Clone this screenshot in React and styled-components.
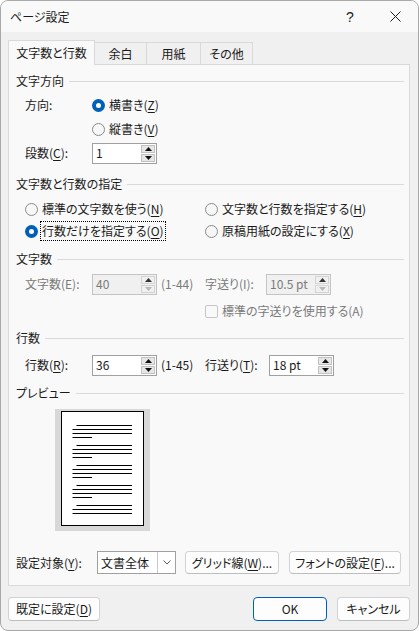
import React from 'react';
import styled, { createGlobalStyle, css } from 'styled-components';

const GlobalStyle = createGlobalStyle`
  html, body { margin: 0; padding: 0; background: #ffffff; }
  body {
    font-family: "Noto Sans CJK JP", "Noto Sans", sans-serif;
    font-size: 12px;
    line-height: 16px;
    color: #1a1a1a;
    font-feature-settings: "palt";
  }
  * { box-sizing: border-box; }
`;

const Window = styled.div`
  width: 419px;
  height: 631px;
  background: #f0f0f0;
  border: 1px solid #a8a8a8;
  border-radius: 8px;
  overflow: hidden;
  display: flex;
  flex-direction: column;
`;

const TitleBar = styled.div`
  height: 31px;
  flex: none;
  display: flex;
  align-items: center;
  background: #f9f9f9;
  padding-left: 9px;
`;

const TitleText = styled.div`
  flex: 1;
  color: #1a1a1a;
`;

const TitleButton = styled.div`
  width: ${p => p.$w}px;
  height: 31px;
  display: flex;
  align-items: center;
  justify-content: center;
  font-family: "Liberation Sans", sans-serif;
  font-size: 14px;
  color: #1a1a1a;
`;

const Body = styled.div`
  flex: 1;
  display: flex;
  flex-direction: column;
  padding: 8px 8px 0 7px;
`;

const TabRow = styled.div`
  display: flex;
  align-items: flex-end;
  height: 24px;
`;

const Tab = styled.div`
  width: ${p => p.$w}px;
  height: ${p => (p.$active ? 25 : 22)}px;
  margin-bottom: ${p => (p.$active ? -1 : 0)}px;
  margin-left: ${p => (p.$first ? 0 : -1)}px;
  border: 1px solid #d9d9d9;
  border-bottom: none;
  background: ${p => (p.$active ? '#f9f9f9' : '#f0f0f0')};
  display: flex;
  align-items: center;
  justify-content: center;
  position: relative;
  z-index: ${p => (p.$active ? 2 : 1)};
  padding-bottom: ${p => (p.$active ? 1 : 0)}px;
  color: #1a1a1a;
`;

const Panel = styled.div`
  height: 522px;
  flex: none;
  border: 1px solid #d9d9d9;
  background: #f9f9f9;
  padding: 0 5px 0 7px;
  display: flex;
  flex-direction: column;
`;

const SectionHeader = styled.div`
  display: flex;
  align-items: center;
  height: 18px;
  margin-top: ${p => p.$mt}px;
`;

const SectionRule = styled.div`
  flex: 1;
  height: 1px;
  background: #dadada;
  margin-left: 5px;
`;

const FieldRow = styled.div`
  display: flex;
  align-items: center;
  height: 22px;
  margin-top: ${p => p.$mt}px;
  padding-left: ${p => (p.$indent ?? 9)}px;
`;

const Label = styled.div`
  width: ${p => p.$w}px;
  flex: none;
  white-space: nowrap;
  color: ${p => (p.$disabled ? '#7a7a7a' : '#1a1a1a')};
`;

const Key = styled.span`
  text-decoration: underline;
  text-underline-offset: 2px;
`;

const RadioItem = styled.div`
  display: flex;
  align-items: center;
  gap: 4px;
  white-space: nowrap;
`;

const RadioCircle = styled.span`
  width: 13px;
  height: 13px;
  border-radius: 50%;
  flex: none;
  ${p =>
    p.$checked
      ? css`
          background: #005fb8;
          display: flex;
          align-items: center;
          justify-content: center;
          &::after {
            content: '';
            width: 5px;
            height: 5px;
            border-radius: 50%;
            background: #ffffff;
          }
        `
      : css`
          background: #f7f7f7;
          border: 1px solid #8a8a8a;
        `}
`;

const ItemText = styled.span`
  ${p =>
    p.$focus &&
    css`
      outline: 1px dotted #000;
      outline-offset: 1px;
    `}
  color: ${p => (p.$disabled ? '#7a7a7a' : '#1a1a1a')};
`;

const RadioGrid = styled.div`
  display: grid;
  grid-template-columns: 180px 1fr;
  grid-auto-rows: 22px;
  align-items: center;
  margin-top: ${p => p.$mt}px;
  padding-left: 9px;
`;

const SpinBox = styled.div`
  width: ${p => p.$w}px;
  height: 21px;
  flex: none;
  display: flex;
  border: 1px solid ${p => (p.$disabled ? '#c4c4c4' : '#a0a0a0')};
  background: ${p => (p.$disabled ? '#f0f0f0' : '#ffffff')};
`;

const SpinValue = styled.div`
  flex: 1;
  display: flex;
  align-items: center;
  padding-left: 3px;
  white-space: nowrap;
  color: ${p => (p.$disabled ? '#7a7a7a' : '#1a1a1a')};
`;

const SpinButtons = styled.div`
  width: 15px;
  flex: none;
  display: flex;
  flex-direction: column;
  gap: 1px;
  padding: 1px 1px 1px 0;
`;

const SpinButton = styled.div`
  flex: 1;
  background: ${p => (p.$disabled ? '#f0f0f0' : '#e6e6e6')};
  border: 1px solid ${p => (p.$disabled ? '#d4d4d4' : '#c2c2c2')};
  display: flex;
  align-items: center;
  justify-content: center;
`;

const Range = styled.div`
  width: 48px;
  flex: none;
  padding-left: 4px;
  white-space: nowrap;
  color: #7a7a7a;
`;

const RangeActive = styled(Range)`
  color: #1a1a1a;
`;

const CheckBox = styled.span`
  width: 13px;
  height: 13px;
  flex: none;
  border: 1px solid #c6c6c6;
  border-radius: 2px;
  background: #f9f9f9;
`;

const PreviewFrame = styled.div`
  margin-top: ${p => p.$mt}px;
  margin-left: 39px;
  width: 95px;
  height: 122px;
  background: #d8d8d8;
  padding: 2px 6px 5px 6px;
`;

const SelectBox = styled.div`
  width: 79px;
  height: 23px;
  flex: none;
  display: flex;
  border: 1px solid #a0a0a0;
  background: #ffffff;
`;

const SelectText = styled.div`
  flex: 1;
  display: flex;
  align-items: center;
  padding-left: 3px;
`;

const SelectArrow = styled.div`
  width: 18px;
  margin: 0 0 0 0;
  border-left: 1px solid #c8c8c8;
  display: flex;
  align-items: center;
  justify-content: center;
`;

const Button = styled.div`
  width: ${p => p.$w}px;
  height: ${p => p.$h}px;
  margin-left: ${p => p.$ml || 0}px;
  flex: none;
  display: flex;
  align-items: center;
  justify-content: center;
  white-space: nowrap;
  background: #fdfdfd;
  border: 1px solid ${p => (p.$primary ? '#005fb8' : '#d2d2d2')};
  border-bottom-color: ${p => (p.$primary ? '#005fb8' : '#bdbdbd')};
  border-radius: 4px;
  color: #1a1a1a;
`;

const Footer = styled.div`
  display: flex;
  align-items: center;
  padding: 11px 0 0 0;
`;

const Spacer = styled.div`
  flex: 1;
`;

const Arrow = ({ up, color }) => (
  <svg width="7" height="4" viewBox="0 0 7 4">
    {up ? (
      <polygon points="0,4 7,4 3.5,0" fill={color} />
    ) : (
      <polygon points="0,0 7,0 3.5,4" fill={color} />
    )}
  </svg>
);

const Spin = ({ value, w = 65, disabled }) => (
  <SpinBox $w={w} $disabled={disabled}>
    <SpinValue $disabled={disabled}>{value}</SpinValue>
    <SpinButtons>
      <SpinButton $disabled={disabled}>
        <Arrow up color={disabled ? '#333' : '#111'} />
      </SpinButton>
      <SpinButton $disabled={disabled}>
        <Arrow color={disabled ? '#b8b8b8' : '#111'} />
      </SpinButton>
    </SpinButtons>
  </SpinBox>
);

const Radio = ({ checked, children, focus }) => (
  <RadioItem>
    <RadioCircle $checked={checked} />
    <ItemText $focus={focus}>{children}</ItemText>
  </RadioItem>
);

const Section = ({ title, mt }) => (
  <SectionHeader $mt={mt}>
    <span>{title}</span>
    <SectionRule />
  </SectionHeader>
);

const PreviewPage = () => {
  const groups = [14, 34, 54, 74, 94];
  const lines = [];
  groups.forEach((g, gi) => {
    const count = gi === 4 ? 3 : 4;
    for (let i = 0; i < count; i++) {
      const y = g + i * 4 + 0.5;
      let x1 = 11.5;
      let x2 = 71;
      if (i === 0) x1 = 15.5;
      if (i === 3) x2 = 31;
      lines.push(<line key={`${gi}-${i}`} x1={x1} y1={y} x2={x2} y2={y} stroke="#000" strokeWidth="1" />);
    }
  });
  return (
    <svg width="83" height="115" viewBox="0 0 83 115" style={{ display: 'block' }}>
      <rect x="0.5" y="0.5" width="82" height="114" fill="#fff" stroke="#000" strokeWidth="1" />
      {lines}
    </svg>
  );
};

export default function App() {
  return (
    <>
      <GlobalStyle />
      <Window>
        <TitleBar>
          <TitleText>ページ設定</TitleText>
          <TitleButton $w={44}>?</TitleButton>
          <TitleButton $w={46}>
            <svg width="11" height="11" viewBox="0 0 11 11">
              <path d="M0.5 0.5 L10.5 10.5 M10.5 0.5 L0.5 10.5" stroke="#1a1a1a" strokeWidth="1" />
            </svg>
          </TitleButton>
        </TitleBar>
        <Body>
          <TabRow>
            <Tab $active $first $w={87}>文字数と行数</Tab>
            <Tab $w={53}>余白</Tab>
            <Tab $w={55}>用紙</Tab>
            <Tab $w={53}>その他</Tab>
          </TabRow>
          <Panel>
            <Section title="文字方向" mt={7} />
            <FieldRow $mt={4}>
              <Label $w={67}>方向:</Label>
              <Radio checked>
                横書き(<Key>Z</Key>)
              </Radio>
            </FieldRow>
            <FieldRow $mt={2}>
              <Label $w={67} />
              <Radio>
                縦書き(<Key>V</Key>)
              </Radio>
            </FieldRow>
            <FieldRow $mt={2}>
              <Label $w={67}>
                段数(<Key>C</Key>):
              </Label>
              <Spin value="1" />
            </FieldRow>

            <Section title="文字数と行数の指定" mt={11} />
            <RadioGrid $mt={5}>
              <Radio>
                標準の文字数を使う(<Key>N</Key>)
              </Radio>
              <Radio>
                文字数と行数を指定する(<Key>H</Key>)
              </Radio>
              <Radio checked focus>
                行数だけを指定する(<Key>O</Key>)
              </Radio>
              <Radio>
                原稿用紙の設定にする(<Key>X</Key>)
              </Radio>
            </RadioGrid>

            <Section title="文字数" mt={8} />
            <FieldRow $mt={5}>
              <Label $w={67} $disabled>
                文字数(E):
              </Label>
              <Spin value="40" disabled />
              <Range>(1-44)</Range>
              <Label $w={61} $disabled>
                字送り(I):
              </Label>
              <Spin value="10.5 pt" disabled />
            </FieldRow>
            <FieldRow $mt={5} $indent={189}>
              <RadioItem>
                <CheckBox />
                <ItemText $disabled>標準の字送りを使用する(A)</ItemText>
              </RadioItem>
            </FieldRow>

            <Section title="行数" mt={7} />
            <FieldRow $mt={7}>
              <Label $w={67}>
                行数(<Key>R</Key>):
              </Label>
              <Spin value="36" />
              <RangeActive>(1-45)</RangeActive>
              <Label $w={64}>
                行送り(<Key>T</Key>):
              </Label>
              <Spin value="18 pt" />
            </FieldRow>

            <Section title="プレビュー" mt={8} />
            <PreviewFrame $mt={7}>
              <PreviewPage />
            </PreviewFrame>

            <FieldRow $mt={20} $indent={0} style={{ height: 23 }}>
              <Label $w={81}>
                設定対象(<Key>Y</Key>):
              </Label>
              <SelectBox>
                <SelectText>文書全体</SelectText>
                <SelectArrow>
                  <svg width="8" height="5" viewBox="0 0 8 5">
                    <polyline points="0.5,0.5 4,4 7.5,0.5" fill="none" stroke="#5a5a5a" strokeWidth="1" />
                  </svg>
                </SelectArrow>
              </SelectBox>
              <Button $w={94} $h={23} $ml={9}>
                グリッド線(<Key>W</Key>)...
              </Button>
              <Button $w={112} $h={23} $ml={10}>
                フォントの設定(<Key>F</Key>)...
              </Button>
            </FieldRow>
          </Panel>
          <Footer>
            <Button $w={92} $h={24}>
              既定に設定(<Key>D</Key>)
            </Button>
            <Spacer />
            <Button $w={74} $h={24} $primary>
              OK
            </Button>
            <Button $w={73} $h={24} $ml={10}>
              キャンセル
            </Button>
          </Footer>
        </Body>
      </Window>
    </>
  );
}
